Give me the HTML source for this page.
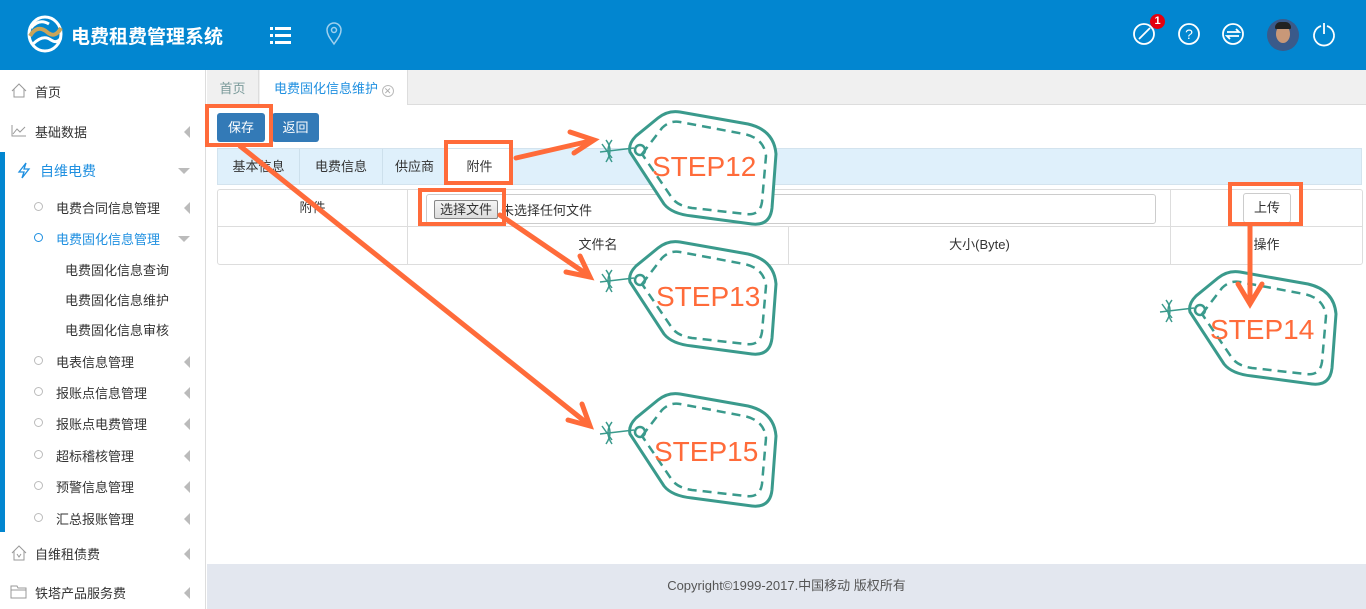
<!DOCTYPE html>
<html><head><meta charset="utf-8">
<style>
*{margin:0;padding:0;box-sizing:border-box}
body{width:1366px;height:609px;overflow:hidden;position:relative;background:#fff;font-family:"Liberation Sans","Noto Sans CJK SC",sans-serif;font-size:13px;color:#333}
.hdr{position:absolute;left:0;top:0;width:1366px;height:70px;background:#0286d0}
.title{position:absolute;left:71px;top:22px;color:#fff;font-size:19px;font-weight:bold}
.side{position:absolute;left:0;top:70px;width:206px;height:539px;border-right:1px solid #ddd;background:#fff}
.it{position:absolute;left:0;width:206px;height:20px;font-size:13px}
.it .t{position:absolute;top:0}
.arr{position:absolute;right:16px;top:4px;width:0;height:0;border-top:6px solid transparent;border-bottom:6px solid transparent;border-right:6px solid #bbb}
.dn{position:absolute;right:16px;top:7px;width:0;height:0;border-left:6px solid transparent;border-right:6px solid transparent;border-top:6px solid #bbb}
.dot{position:absolute;left:34px;top:4px;width:9px;height:9px;border:1px solid #bbb;border-radius:50%}
.tabbar{position:absolute;left:207px;top:70px;width:1159px;height:35px;background:#f0f0f0;border-bottom:1px solid #ddd}
.btn{position:absolute;top:113px;height:29px;background:#337ab7;color:#fff;border-radius:3px;text-align:center;line-height:29px}
.strip{position:absolute;left:217px;top:148px;width:1145px;height:37px;background:#dff0fb;border:1px solid #d3e3ee}
.strip span{position:absolute;top:0;height:35px;line-height:35px;text-align:center;border-right:1px solid #cde0ec}
.tbl{position:absolute;left:217px;top:189px;width:1146px;height:76px;border:1px solid #ddd;border-radius:3px}
.c{position:absolute;text-align:center;line-height:36px;border-right:1px solid #ddd}
.ob{position:absolute;border:4px solid #ff6b3a}
.foot{position:absolute;left:207px;top:564px;width:1159px;height:45px;background:#e3e7ef;text-align:center;line-height:44px;color:#555}
</style></head><body>
<div class="hdr">
<svg style="position:absolute;left:27px;top:14px" width="36" height="40" viewBox="0 0 36 40"><ellipse cx="18" cy="20" rx="16" ry="17" fill="none" stroke="#fff" stroke-width="3"/><path d="M3 22 Q10 10 20 18 Q28 25 34 14" fill="none" stroke="#c9a45a" stroke-width="4"/><path d="M6 30 Q16 20 24 26 Q30 30 34 24" fill="none" stroke="#fff" stroke-width="3"/><path d="M4 14 Q12 4 22 10" fill="none" stroke="#fff" stroke-width="3"/></svg>
<div class="title">电费租费管理系统</div>
<svg style="position:absolute;left:270px;top:25px" width="22" height="20"><g fill="#fff"><rect x="0" y="2" width="3" height="3"/><rect x="5" y="2" width="16" height="3"/><rect x="0" y="9" width="3" height="3"/><rect x="5" y="9" width="16" height="3"/><rect x="0" y="16" width="3" height="3"/><rect x="5" y="16" width="16" height="3"/></g></svg>
<svg style="position:absolute;left:325px;top:22px" width="18" height="24"><path d="M9 22 C4 15 2 12 2 8 A7 7 0 0 1 16 8 C16 12 14 15 9 22Z" fill="none" stroke="#9fd0ee" stroke-width="1.5"/><circle cx="9" cy="8" r="2.5" fill="none" stroke="#9fd0ee" stroke-width="1.5"/></svg>
<svg style="position:absolute;left:1130px;top:20px" width="220" height="32" fill="none" stroke="#fff" stroke-width="1.8"><circle cx="14" cy="14" r="10"/><path d="M9 19 L20 8"/><circle cx="59" cy="14" r="10"/><text x="59" y="19" font-size="14" fill="#fff" stroke="none" text-anchor="middle" font-family="Liberation Sans">?</text><circle cx="103" cy="14" r="10"/><path d="M97 12 H109 L106 9 M109 16 H97 L100 19"/><path d="M197 6 A10 10 0 1 1 191 6 M194 3 V14"/></svg>
<div style="position:absolute;left:1150px;top:14px;width:15px;height:15px;border-radius:50%;background:#e4000f;color:#fff;font-size:11px;font-weight:bold;text-align:center;line-height:15px">1</div>
<div style="position:absolute;left:1267px;top:19px;width:32px;height:32px;border-radius:50%;background:#3a5a8a;overflow:hidden"><div style="position:absolute;left:9px;top:6px;width:14px;height:18px;border-radius:50%;background:#c89878"></div><div style="position:absolute;left:8px;top:3px;width:16px;height:7px;border-radius:8px 8px 2px 2px;background:#222"></div></div>
</div>
<div class="side">
<div class="it" style="top:12px"><svg style="position:absolute;left:11px;top:1px" width="16" height="15" fill="none" stroke="#999"><path d="M1 8 L8 1 L15 8 M3 6 V14 H13 V6"/></svg><span class="t" style="left:35px">首页</span></div>
<div class="it" style="top:52px"><svg style="position:absolute;left:11px;top:2px" width="16" height="13" fill="none" stroke="#999"><path d="M1 1 V12 H15 M2 10 L6 5 L9 8 L14 3"/></svg><span class="t" style="left:35px">基础数据</span><i class="arr"></i></div>
<div style="position:absolute;left:0;top:82px;width:5px;height:380px;background:#0286d0"></div>
<div class="it" style="top:91px;color:#1e8fe0;font-size:14px"><svg style="position:absolute;left:17px;top:1px" width="14" height="17" fill="none" stroke="#1e8fe0" stroke-width="1.3"><path d="M9 1 L2 10 H7 L5 16 L12 7 H7 Z"/></svg><span class="t" style="left:40px">自维电费</span><i class="dn"></i></div>
<div class="it" style="top:128px"><i class="dot"></i><span class="t" style="left:56px">电费合同信息管理</span><i class="arr"></i></div>
<div class="it" style="top:159px;color:#1e8fe0"><i class="dot" style="border-color:#1e8fe0"></i><span class="t" style="left:56px">电费固化信息管理</span><i class="dn"></i></div>
<div class="it" style="top:190px"><span class="t" style="left:65px">电费固化信息查询</span></div>
<div class="it" style="top:220px"><span class="t" style="left:65px">电费固化信息维护</span></div>
<div class="it" style="top:250px"><span class="t" style="left:65px">电费固化信息审核</span></div>
<div class="it" style="top:282px"><i class="dot"></i><span class="t" style="left:56px">电表信息管理</span><i class="arr"></i></div>
<div class="it" style="top:313px"><i class="dot"></i><span class="t" style="left:56px">报账点信息管理</span><i class="arr"></i></div>
<div class="it" style="top:344px"><i class="dot"></i><span class="t" style="left:56px">报账点电费管理</span><i class="arr"></i></div>
<div class="it" style="top:376px"><i class="dot"></i><span class="t" style="left:56px">超标稽核管理</span><i class="arr"></i></div>
<div class="it" style="top:407px"><i class="dot"></i><span class="t" style="left:56px">预警信息管理</span><i class="arr"></i></div>
<div class="it" style="top:439px"><i class="dot"></i><span class="t" style="left:56px">汇总报账管理</span><i class="arr"></i></div>
<div class="it" style="top:474px"><svg style="position:absolute;left:11px;top:1px" width="16" height="16" fill="none" stroke="#999"><path d="M1 8 L8 1 L15 8 M3 6 V15 H13 V6 M6 9 L8 12 L10 9"/></svg><span class="t" style="left:35px">自维租债费</span><i class="arr"></i></div>
<div class="it" style="top:513px"><svg style="position:absolute;left:10px;top:2px" width="17" height="14" fill="none" stroke="#999"><path d="M1 1 H7 L8 3 H16 V13 H1 Z M1 5 H16"/></svg><span class="t" style="left:35px">铁塔产品服务费</span><i class="arr"></i></div>
</div>
<div class="tabbar">
<span style="position:absolute;left:0;top:0;width:52px;height:34px;line-height:38px;text-align:center;color:#7a9a9a;border-right:1px solid #ddd">首页</span>
<span style="position:absolute;left:53px;top:0;width:148px;height:35px;line-height:38px;background:#fff;color:#1e8fe0;padding-left:14px;border-right:1px solid #ddd">电费固化信息维护 <span style="display:inline-block;width:12px;height:12px;border:1px solid #bbb;border-radius:50%;font-size:9px;line-height:10px;text-align:center;color:#aaa;vertical-align:-1px">✕</span></span>
</div>
<div class="btn" style="left:217px;width:48px">保存</div>
<div class="btn" style="left:272px;width:47px">返回</div>
<div class="strip">
<span style="left:0;width:82px">基本信息</span><span style="left:82px;width:83px">电费信息</span><span style="left:165px;width:64px">供应商</span><span style="left:229px;width:66px;background:#fff">附件</span>
</div>
<div class="tbl">
<div class="c" style="left:0;top:0;width:190px;height:37px;border-bottom:1px solid #ddd">附件</div>
<div class="c" style="left:190px;top:0;width:763px;height:37px;border-bottom:1px solid #ddd"></div>
<div style="position:absolute;left:208px;top:4px;width:730px;height:30px;border:1px solid #ccc;border-radius:3px"></div>
<div style="position:absolute;left:216px;top:10px;width:64px;height:19px;border:1px solid #888;background:linear-gradient(#f4f4f4,#dcdcdc);font-size:13px;text-align:center;line-height:17px;border-radius:2px">选择文件</div>
<span style="position:absolute;left:283px;top:10px">未选择任何文件</span>
<div class="c" style="left:953px;top:0;width:191px;height:37px;border-right:none;border-bottom:1px solid #ddd"></div>
<div style="position:absolute;left:1025px;top:3px;width:48px;height:30px;border:1px solid #ccc;border-radius:3px;text-align:center;line-height:28px">上传</div>
<div class="c" style="left:0;top:37px;width:190px;height:37px"></div>
<div class="c" style="left:190px;top:37px;width:381px;height:37px">文件名</div>
<div class="c" style="left:571px;top:37px;width:382px;height:37px">大小(Byte)</div>
<div class="c" style="left:953px;top:37px;width:191px;height:37px;border-right:none">操作</div>
</div>
<div class="foot">Copyright©1999-2017.中国移动 版权所有</div>
<div class="ob" style="left:205px;top:104px;width:68px;height:43px"></div>
<div class="ob" style="left:444px;top:140px;width:69px;height:45px"></div>
<div class="ob" style="left:418px;top:188px;width:88px;height:38px"></div>
<div class="ob" style="left:1228px;top:182px;width:75px;height:44px"></div>
<svg style="position:absolute;left:0;top:0" width="1366" height="609">
<defs>
<g id="tag">
<path d="M10 42 Q8 34 16 26 L38 8 Q48 0 60 2 L128 14 Q154 20 156 44 L152 98 Q150 116 132 114 L72 106 Q52 104 44 94 Z" fill="#fff" stroke="#3a9a8c" stroke-width="3"/>
<path d="M22 44 L42 18 Q50 10 60 12 L124 24 Q144 28 146 46 L142 92 Q140 106 126 104 L72 98 Q58 96 52 88 Z" fill="none" stroke="#3a9a8c" stroke-width="2.5" stroke-dasharray="9 6"/>
<circle cx="20" cy="40" r="5" fill="none" stroke="#3a9a8c" stroke-width="2.5"/>
<path d="M-20 42 L14 38 M-18 34 L-8 48 M-14 30 Q-6 40 -14 52 M-8 30 Q-16 40 -8 52" fill="none" stroke="#3a9a8c" stroke-width="1.5"/>
</g>
</defs>
<use href="#tag" x="620" y="110"/>
<use href="#tag" x="620" y="240"/>
<use href="#tag" x="1180" y="270"/>
<use href="#tag" x="620" y="392"/>
<g font-family="Liberation Sans" font-size="28" fill="#ff6b3a">
<text x="652" y="176">STEP12</text>
<text x="656" y="306">STEP13</text>
<text x="1210" y="339">STEP14</text>
<text x="654" y="461">STEP15</text>
</g>
<g stroke="#ff6b3a" stroke-width="5" fill="none" stroke-linecap="round">
<path d="M516 158 L590 141"/><path d="M570 132 L594 140 L574 153"/>
<path d="M240 146 L588 424"/><path d="M568 420 L590 426 L582 404"/>
<path d="M500 215 L588 275"/><path d="M566 272 L590 277 L580 256"/>
<path d="M1250 226 L1250 302"/><path d="M1238 284 L1250 304 L1262 284"/>
</g>
</svg>
</body></html>
